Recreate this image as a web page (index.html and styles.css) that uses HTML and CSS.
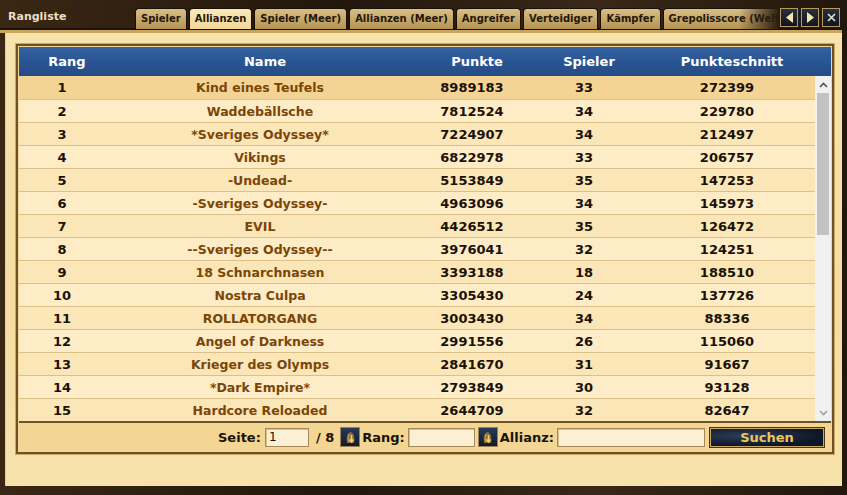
FILE: index.html
```html
<!DOCTYPE html>
<html>
<head>
    <link rel="stylesheet" href="styles.css">
</head>
<body>
    <div class="window">
        <div class="titlebar">
            <div class="title">Rangliste</div>
            <div class="tabs">
                <span class="tab">Spieler</span>
                <span class="tab active">Allianzen</span>
                <span class="tab">Spieler (Meer)</span>
                <span class="tab">Allianzen (Meer)</span>
                <span class="tab">Angreifer</span>
                <span class="tab">Verteidiger</span>
                <span class="tab">Kämpfer</span>
                <span class="tab">Grepolisscore (Welt)</span>
            </div>
            <div class="nav">
                <span class="navbtn"><svg width="11" height="13" viewBox="0 0 11 13"><path d="M9 1 L2 6.5 L9 12 Z" fill="#f2e6b0"/></svg></span>
                <span class="navbtn"><svg width="11" height="13" viewBox="0 0 11 13"><path d="M2 1 L9 6.5 L2 12 Z" fill="#f2e6b0"/></svg></span>
                <span class="navbtn"><svg width="11" height="11" viewBox="0 0 11 11"><path d="M2 2 L9 9 M9 2 L2 9" stroke="#e8e0c8" stroke-width="1.6"/></svg></span>
            </div>
        </div>

        <div class="content">
            <div class="panel">
                <div class="head">
                    <span>Rang</span>
                    <span>Name</span>
                    <span>Punkte</span>
                    <span>Spieler</span>
                    <span>Punkteschnitt</span>
                </div>
                <div class="body">
                    <div class="rows" id="rows"></div>
                    <div class="scrollbar">
                        <div class="arrow"><svg width="9" height="6" viewBox="0 0 9 6"><path d="M1 5 L4.5 1.5 L8 5" fill="none" stroke="#505050" stroke-width="1.6"/></svg></div>
                        <div class="thumb"></div>
                        <div class="track"></div>
                        <div class="arrow"><svg width="9" height="6" viewBox="0 0 9 6"><path d="M1 1 L4.5 4.5 L8 1" fill="none" stroke="#a0a0a0" stroke-width="1.6"/></svg></div>
                    </div>
                </div>
                <div class="footer">
                    <label class="lbl">Seite:</label>
                    <input class="inp page" type="text" value="1">
                    <span class="lbl of">/ 8</span>
                    <span class="iconbtn"><svg width="17" height="17" viewBox="0 0 17 17"><path d="M5 14 C4 9 5 4 8.5 3 C12 4 13 9 12 14 Z" fill="#8a6a3c"/><path d="M7 5 C6 8 6 11 7 13" stroke="#c8a870" stroke-width="1" fill="none"/><path d="M9.5 6 V12 M7.5 10.5 L9.5 13 L11.5 10.5" stroke="#f5d35a" stroke-width="1.6" fill="none"/></svg></span>
                    <label class="lbl">Rang:</label>
                    <input class="inp rang" type="text">
                    <span class="iconbtn"><svg width="17" height="17" viewBox="0 0 17 17"><path d="M5 14 C4 9 5 4 8.5 3 C12 4 13 9 12 14 Z" fill="#8a6a3c"/><path d="M7 5 C6 8 6 11 7 13" stroke="#c8a870" stroke-width="1" fill="none"/><path d="M9.5 6 V12 M7.5 10.5 L9.5 13 L11.5 10.5" stroke="#f5d35a" stroke-width="1.6" fill="none"/></svg></span>
                    <label class="lbl">Allianz:</label>
                    <input class="inp ally" type="text">
                    <span class="search">Suchen</span>
                </div>
            </div>
        </div>
    </div>

    <script>
        const data = [
            [1, "Kind eines Teufels", 8989183, 33, 272399],
            [2, "Waddebällsche", 7812524, 34, 229780],
            [3, "*Sveriges Odyssey*", 7224907, 34, 212497],
            [4, "Vikings", 6822978, 33, 206757],
            [5, "-Undead-", 5153849, 35, 147253],
            [6, "-Sveriges Odyssey-", 4963096, 34, 145973],
            [7, "EVIL", 4426512, 35, 126472],
            [8, "--Sveriges Odyssey--", 3976041, 32, 124251],
            [9, "18 Schnarchnasen", 3393188, 18, 188510],
            [10, "Nostra Culpa", 3305430, 24, 137726],
            [11, "ROLLATORGANG", 3003430, 34, 88336],
            [12, "Angel of Darkness", 2991556, 26, 115060],
            [13, "Krieger des Olymps", 2841670, 31, 91667],
            [14, "*Dark Empire*", 2793849, 30, 93128],
            [15, "Hardcore Reloaded", 2644709, 32, 82647]
        ];

        const rows = document.getElementById("rows");
        data.forEach((r, i) => {
            let cls = "row" + (i == 0 ? " own" : (i % 2 ? " even" : ""));
            rows.innerHTML += `<div class="${cls}"><span>${r[0]}</span><span class="name">${r[1]}</span><span>${r[2]}</span><span>${r[3]}</span><span>${r[4]}</span></div>`;
        });
    </script>
</body>
</html>
```

FILE: styles.css
```css
:root {
    --frame: #2b1d10;
    --gold: #d9b56c;
    --beige: #f7e0a8;
    --blue: #2a5793;
    --name: #7b4508;
    --text: #1b1206;
}

* {
    box-sizing: border-box;
    font-family: "DejaVu Sans", Verdana, sans-serif;
}

body {
    margin: 0;
    background: var(--frame);
}

.window {
    width: 847px;
    height: 495px;
    display: flex;
    flex-direction: column;
    background: linear-gradient(90deg, #3a2714, #22170c 40%, #3a2818 70%, #22170c);
    padding: 0 5px 9px 0;
}

.titlebar {
    height: 33px;
    display: flex;
    align-items: flex-start;
    padding-top: 8px;
    border-bottom: 3px solid #c9a45c;
    box-shadow: inset 0 -2px 0 #1c1208;
}

.title {
    width: 135px;
    padding-left: 8px;
    padding-top: 2px;
    font-size: 11px;
    font-weight: bold;
    color: #eadfc4;
}

.tabs {
    flex: 1;
    display: flex;
    gap: 2px;
    overflow: hidden;
    white-space: nowrap;
    position: relative;
    height: 21px;
}

.tabs::after {
    content: "";
    position: absolute;
    right: 0;
    top: 0;
    width: 40px;
    height: 21px;
    background: linear-gradient(90deg, rgba(43, 29, 16, 0), #2b1d10);
}

.tab {
    height: 21px;
    line-height: 19px;
    padding: 0 5px;
    font-size: 10px;
    font-weight: bold;
    color: #24170a;
    border: 1px solid #1a1006;
    border-bottom: none;
    border-radius: 4px 4px 0 0;
    background: linear-gradient(#d9bf84, #b39353);
}

.tab.active {
    background: linear-gradient(#fbe9bb, #f1d698);
}

.nav {
    display: flex;
    gap: 3px;
    padding: 0 2px 0 1px;
}

.navbtn {
    width: 18px;
    height: 19px;
    display: flex;
    align-items: center;
    justify-content: center;
    background: linear-gradient(#27303e, #10161f);
    border: 1px solid #b89a5e;
}

.content {
    flex: 1;
    margin-left: 5px;
    background: linear-gradient(#f8e3ad, #f6dca2 60%, #f8e2ac);
    padding: 11px 8px 0 10px;
    border-left: 1px solid #e8cf90;
}

.panel {
    border: 2px solid #6d5129;
    box-shadow: 0 0 0 1px #c9a865;
    background: #f3d594;
    padding: 1px;
}

.head {
    height: 29px;
    display: grid;
    grid-template-columns: 86px 310px 114px 110px 176px;
    padding-left: 5px;
    align-items: center;
    background: linear-gradient(#3462a0, #2a5592 50%, #244c86);
    color: #fff;
    font-size: 13px;
    font-weight: bold;
    text-align: center;
}

.body {
    display: flex;
}

.rows {
    width: 796px;
}

.row {
    height: 23px;
    display: grid;
    grid-template-columns: 86px 310px 114px 110px 176px;
    align-items: center;
    text-align: center;
    font-size: 13px;
    font-weight: bold;
    color: var(--text);
    background: #fbe6b8;
    border-top: 1px solid #dcc089;
}

.row:first-child {
    border-top: none;
}

.row.even {
    background: #fdecc6;
}

.row.own {
    background: #f4d494;
}

.name {
    color: var(--name);
    font-size: 12.5px;
}

.scrollbar {
    width: 17px;
    display: flex;
    flex-direction: column;
    background: #f1f1f1;
}

.arrow {
    height: 17px;
    display: flex;
    align-items: center;
    justify-content: center;
}

.thumb {
    height: 142px;
    margin: 0 2px;
    background: #c3c3c3;
}

.track {
    flex: 1;
}

.footer {
    height: 30px;
    display: flex;
    align-items: center;
    border-top: 2px solid #6d5129;
    padding-left: 199px;
    font-size: 13px;
    font-weight: bold;
    color: var(--text);
}

.lbl {
    font-size: 13px;
}

.inp {
    height: 19px;
    background: #fcf0d4;
    border: 1px solid #a58a58;
    box-shadow: inset 1px 1px 0 #d7c08c;
    font-size: 12px;
    padding: 0 3px;
    color: #1b1206;
}

.inp:focus {
    outline: none;
}

.page {
    width: 44px;
    margin: 0 7px 0 4px;
}

.of {
    margin-right: 6px;
}

.rang {
    width: 67px;
    margin: 0 3px 0 3px;
}

.ally {
    width: 148px;
    margin: 0 5px 0 3px;
}

.iconbtn {
    width: 20px;
    height: 20px;
    display: flex;
    align-items: center;
    justify-content: center;
    background: linear-gradient(#263a58, #0f1a2c);
    border: 1px solid #9c8152;
    margin-right: 2px;
}

.search {
    width: 114px;
    height: 19px;
    line-height: 17px;
    text-align: center;
    color: #f0c55a;
    font-size: 13px;
    font-weight: bold;
    background: radial-gradient(ellipse at 30% 40%, #2b3f5c, #0d1626 70%);
    border: 1px solid #caa860;
    box-shadow: 0 0 0 1px #4a3418;
}
```
